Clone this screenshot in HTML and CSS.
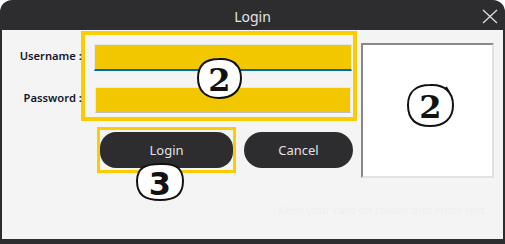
FILE: index.html
```html
<!DOCTYPE html>
<html>
<head>
<meta charset="utf-8">
<link rel="stylesheet" href="styles.css">
</head>
<body>
<div class="window">
  <div class="titlebar">
    <span class="title">Login</span>
    <svg class="close" width="16" height="15" viewBox="0 0 16 15"><path d="M1 1 L15 14 M15 1 L1 14" stroke="#d9d9d9" stroke-width="1.4" fill="none"/></svg>
  </div>
  <div class="content">
    <div class="main">
      <div class="leftcol">
        <div class="formrow">
          <div class="labels">
            <div class="label user">Username :</div>
            <div class="label pass">Password :</div>
          </div>
          <div class="hl fields">
            <div class="field field-user"></div>
            <div class="field field-pass"></div>
          </div>
        </div>
        <div class="buttons">
          <div class="hl hl-btn"><div class="btn btn-login">Login</div></div>
          <div class="btn btn-cancel">Cancel</div>
        </div>
      </div>
      <div class="imagebox"></div>
    </div>
    <div class="hint">Keep your card on reader and enter text</div>
  </div>
  <div class="badge badge-a"><svg width="47" height="43" viewBox="0 0 47 43"><path d="M23 2 C36 1 45 8 45 21 C45 34 36 41 23 41 C10 41 2 34 2 21 C2 8 10 2 23 2 Z" fill="#fff" stroke="#111" stroke-width="2"/><path d="M38 5 L41 9" stroke="#111" stroke-width="2"/><text x="23.5" y="34" text-anchor="middle" class="num">2</text></svg></div>
  <div class="badge badge-b"><svg width="51" height="45" viewBox="0 0 51 45"><path d="M25 2 C39 1 48 9 48 22 C48 36 39 43 25 43 C11 43 3 36 3 22 C3 9 11 2 25 2 Z" fill="#fff" stroke="#111" stroke-width="2"/><path d="M41 4 L44 9" stroke="#111" stroke-width="2"/><text x="25.5" y="35" text-anchor="middle" class="num">2</text></svg></div>
  <div class="badge badge-c"><svg width="50" height="40" viewBox="0 0 50 40"><path d="M25 2 C40 1 48 6 48 19 C48 33 40 38 25 38 C10 38 2 33 2 19 C2 6 10 2 25 2 Z" fill="#fff" stroke="#111" stroke-width="2"/><text x="25" y="33" text-anchor="middle" class="num num3">3</text></svg></div>
</div>
</body>
</html>
```

FILE: styles.css
```css
html, body {
  margin: 0;
  padding: 0;
  background: #ffffff;
}
.window {
  position: relative;
  width: 505px;
  height: 244px;
  background: #2d2d2f;
  border-radius: 12px 12px 0 0;
  overflow: hidden;
  font-family: "Noto Sans", "Open Sans", sans-serif;
}
.titlebar {
  height: 30px;
  display: flex;
  align-items: center;
  justify-content: center;
  position: relative;
}
.title {
  color: #e4e4e4;
  font-size: 14px;
  margin-top: 2px;
}
.close {
  position: absolute;
  right: 7px;
  top: 9px;
}
.content {
  margin: 0 2px;
  height: 209px;
  background: #f4f4f4;
  position: relative;
}
.main {
  display: flex;
}
.leftcol {
  width: 355px;
}
.formrow {
  display: flex;
  padding-top: 1px;
}
.labels {
  width: 81px;
  position: relative;
}
.label {
  position: absolute;
  right: -1px;
  font-size: 11.2px;
  font-weight: 600;
  color: #161628;
  white-space: nowrap;
}
.label.user { top: 17px; }
.label.pass { top: 59px; }
.hl {
  border: 4px solid #fccb00;
}
.fields {
  width: 265px;
  height: 73px;
  padding: 9px 1px 0 9px;
  box-sizing: content-box;
  display: flex;
  flex-direction: column;
}
.field {
  background: #f2c700;
  border: 1px solid #e9e9e9;
  box-sizing: border-box;
}
.field-user {
  height: 27px;
  border-bottom: 2px solid #0067c0;
}
.field-pass {
  height: 26px;
  margin-top: 16px;
  margin-left: 1px;
  margin-right: 1px;
  border-bottom-color: #bdbdbd;
}
.buttons {
  display: flex;
  align-items: center;
  margin-top: 6px;
  padding-left: 95px;
  gap: 8px;
}
.hl-btn {
  border-width: 3px;
  width: 133px;
  height: 40px;
  display: flex;
  align-items: center;
  justify-content: center;
}
.btn {
  background: #2d2d2f;
  color: #e2e2e2;
  font-size: 13px;
  height: 36px;
  border-radius: 18px;
  display: flex;
  align-items: center;
  justify-content: center;
  box-sizing: border-box;
}
.btn-login {
  width: 133px;
  border-radius: 16px;
}
.btn-cancel {
  width: 109px;
}
.imagebox {
  margin-left: 4px;
  margin-top: 13px;
  width: 133px;
  height: 135px;
  box-sizing: border-box;
  background: #ffffff;
  border-top: 2px solid #8a8a8a;
  border-left: 2px solid #8a8a8a;
  border-right: 2px solid #e2e2e2;
  border-bottom: 2px solid #e2e2e2;
}
.hint {
  position: absolute;
  right: 18px;
  top: 172px;
  font-size: 11px;
  color: #efefef;
}
.badge {
  position: absolute;
  line-height: 0;
}
.badge-a { left: 196px; top: 57px; }
.badge-b { left: 405px; top: 83px; }
.badge-c { left: 135px; top: 162px; }
.num {
  font-family: "DejaVu Serif", serif;
  font-weight: bold;
  font-size: 32px;
  fill: #111;
}
.num3 {
  font-family: "DejaVu Sans", sans-serif;
  font-size: 32px;
}
```
